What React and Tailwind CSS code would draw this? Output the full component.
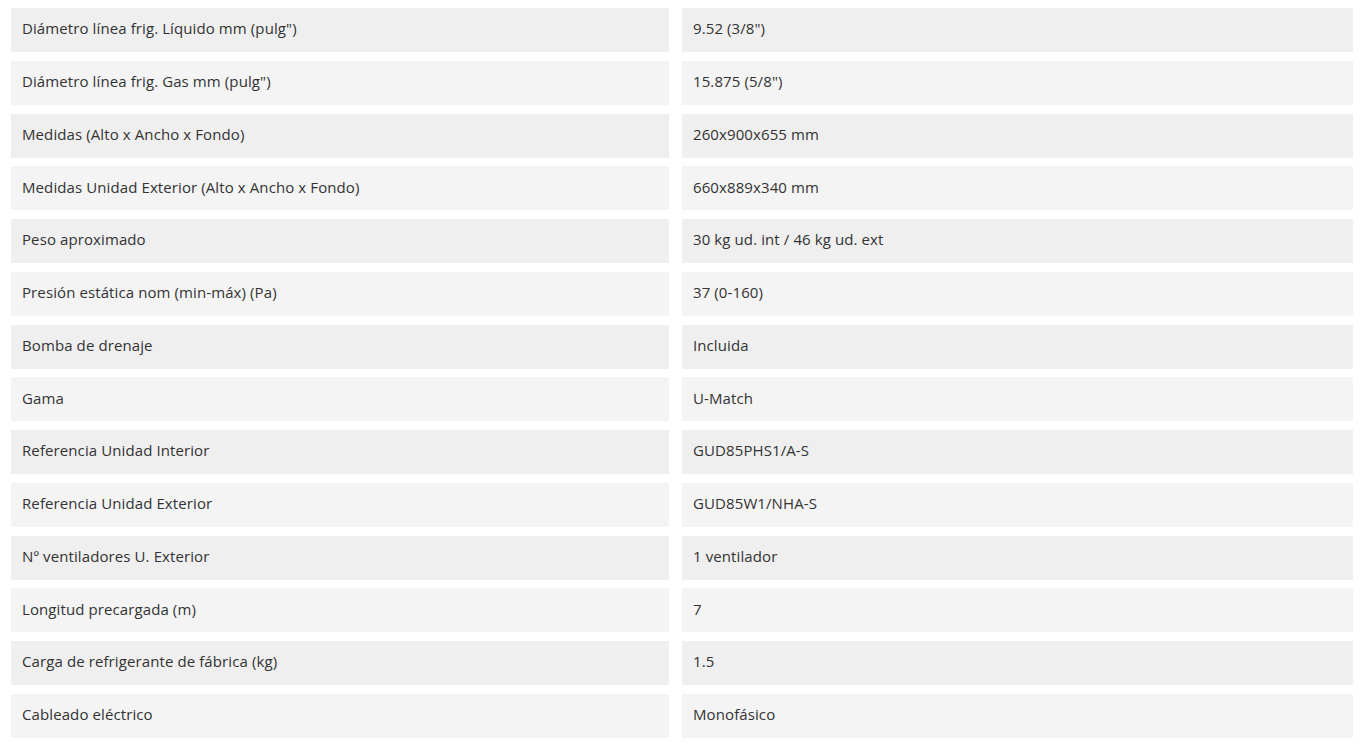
import React from 'react';

const specs = [
  ['Diámetro línea frig. Líquido mm (pulg")', '9.52 (3/8")'],
  ['Diámetro línea frig. Gas mm (pulg")', '15.875 (5/8")'],
  ['Medidas (Alto x Ancho x Fondo)', '260x900x655 mm'],
  ['Medidas Unidad Exterior (Alto x Ancho x Fondo)', '660x889x340 mm'],
  ['Peso aproximado', '30 kg ud. int / 46 kg ud. ext'],
  ['Presión estática nom (min-máx) (Pa)', '37 (0-160)'],
  ['Bomba de drenaje', 'Incluida'],
  ['Gama', 'U-Match'],
  ['Referencia Unidad Interior', 'GUD85PHS1/A-S'],
  ['Referencia Unidad Exterior', 'GUD85W1/NHA-S'],
  ['Nº ventiladores U. Exterior', '1 ventilador'],
  ['Longitud precargada (m)', '7'],
  ['Carga de refrigerante de fábrica (kg)', '1.5'],
  ['Cableado eléctrico', 'Monofásico'],
];

export default function App() {
  return (
    <div className="min-h-screen bg-white pt-[8px] pl-[11px] pr-[14px] font-['Open_Sans',sans-serif] text-[15px] tracking-[0.1px] text-[#333]">
      <div className="flex flex-col gap-[8.77px]">
        {specs.map(([label, value], i) => {
          const bg = i % 2 === 0 ? 'bg-[#efefef]' : 'bg-[#f4f4f4]';
          return (
            <div key={label} className="flex gap-[13px]">
              <div className={`w-[658px] h-[44px] flex items-center px-[11px] pb-[3px] ${bg}`}>{label}</div>
              <div className={`flex-1 h-[44px] flex items-center px-[11px] pb-[3px] ${bg}`}>{value}</div>
            </div>
          );
        })}
      </div>
    </div>
  );
}
